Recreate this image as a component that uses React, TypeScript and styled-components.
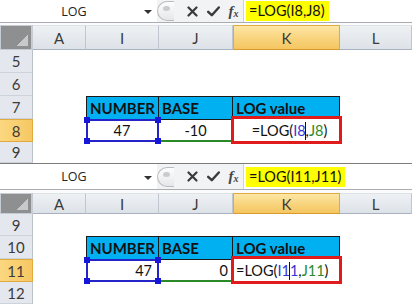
import React from "react";
import styled, { createGlobalStyle } from "styled-components";

const GlobalStyle = createGlobalStyle`
  html, body {
    margin: 0;
    padding: 0;
    background: #fff;
  }
  body {
    width: 412px;
    height: 304px;
    overflow: hidden;
    font-family: "Lato", "Liberation Sans", sans-serif;
  }
`;

type RowDef = { n: number; h: number };

type SheetDef = {
  name: string;
  formula: string;
  barHeight: number;
  gap: number;
  headHeight: number;
  rows: RowDef[];
  headerRow: number;
  dataRow: number;
  number: string;
  base: string;
  align: "center" | "right";
  formulaAlign: "center" | "left";
  formulaCell: React.ReactNode;
};

const COLS = ["A", "I", "J", "K", "L"];
const SELECTED_COL = "K";

const Caret = styled.span`
  display: inline-block;
  width: 1px;
  height: 18px;
  background: #111;
  vertical-align: middle;
  margin: 0 -0.5px;
`;

const Blue = styled.span`
  color: #3535cf;
`;

const Green = styled.span`
  color: #2b8a2b;
`;

const sheets: SheetDef[] = [
  {
    name: "LOG",
    formula: "=LOG(I8,J8)",
    barHeight: 22,
    gap: 2,
    headHeight: 25,
    rows: [
      { n: 5, h: 23 },
      { n: 6, h: 23 },
      { n: 7, h: 23 },
      { n: 8, h: 23 },
      { n: 9, h: 21 },
    ],
    headerRow: 7,
    dataRow: 8,
    number: "47",
    base: "-10",
    align: "center",
    formulaAlign: "center",
    formulaCell: (
      <>
        =LOG(<Blue>I8</Blue>
        <Caret />,<Green>J8</Green>)
      </>
    ),
  },
  {
    name: "LOG",
    formula: "=LOG(I11,J11)",
    barHeight: 25,
    gap: 3,
    headHeight: 21,
    rows: [
      { n: 9, h: 22 },
      { n: 10, h: 23 },
      { n: 11, h: 23 },
      { n: 12, h: 22 },
    ],
    headerRow: 10,
    dataRow: 11,
    number: "47",
    base: "0",
    align: "right",
    formulaAlign: "left",
    formulaCell: (
      <>
        =LOG(<Blue>I1</Blue>
        <Caret />
        <Blue>1</Blue>,<Green>J11</Green>)
      </>
    ),
  },
];

const XIcon = () => (
  <svg width="11" height="11" viewBox="0 0 11 11">
    <path d="M1.5 1.5 L9.5 9.5 M9.5 1.5 L1.5 9.5" stroke="#3a3a3a" strokeWidth="2.2" strokeLinecap="round" />
  </svg>
);

const CheckIcon = () => (
  <svg width="13" height="11" viewBox="0 0 13 11">
    <path d="M1.2 5.8 L4.8 9.2 L11.8 1.5" fill="none" stroke="#3a3a3a" strokeWidth="2.4" strokeLinecap="round" strokeLinejoin="round" />
  </svg>
);

const App = () => {
  return (
    <Page>
      <GlobalStyle />
      {sheets.map((s, i) => (
        <Panel key={i} $last={i === sheets.length - 1}>
          <FormulaBar $h={s.barHeight}>
            <NameBox>
              <NameText>{s.name}</NameText>
              <DropArrow />
            </NameBox>
            <Controls>
              <Splitter />
              <IconSlot $w={20}>
                <XIcon />
              </IconSlot>
              <IconSlot $w={22}>
                <CheckIcon />
              </IconSlot>
              <Fx>
                f<sub>x</sub>
              </Fx>
            </Controls>
            <FormulaInput>
              <Highlight>{s.formula}</Highlight>
            </FormulaInput>
          </FormulaBar>
          <BarGap $h={s.gap} />
          <Grid $rows={[s.headHeight, ...s.rows.map((r) => r.h)]}>
            <Corner />
            {COLS.map((c) => (
              <ColHead key={c} $selected={c === SELECTED_COL}>
                {c}
              </ColHead>
            ))}
            {s.rows.map((r) => (
              <React.Fragment key={r.n}>
                <RowHead $selected={r.n === s.dataRow}>{r.n}</RowHead>
                {r.n === s.headerRow ? (
                  <>
                    <Cell />
                    <TitleCell $first>NUMBER</TitleCell>
                    <TitleCell>BASE</TitleCell>
                    <TitleCell>LOG value</TitleCell>
                    <Cell />
                  </>
                ) : r.n === s.dataRow ? (
                  <>
                    <Cell />
                    <RefCell $align={s.align}>
                      {s.number}
                      <Handle $top $left />
                      <Handle $top />
                      <Handle $left />
                      <Handle />
                    </RefCell>
                    <BaseCell $align={s.align}>{s.base}</BaseCell>
                    <FormulaCell $align={s.formulaAlign}>{s.formulaCell}</FormulaCell>
                    <Cell />
                  </>
                ) : (
                  COLS.map((c) => <Cell key={c} />)
                )}
              </React.Fragment>
            ))}
          </Grid>
        </Panel>
      ))}
    </Page>
  );
};

export default App;

const Page = styled.div`
  width: 412px;
  height: 304px;
  display: flex;
  flex-direction: column;
  overflow: hidden;
`;

const Panel = styled.section<{ $last?: boolean }>`
  display: flex;
  flex-direction: column;
  border-bottom: ${(p) => (p.$last ? "none" : "1px solid #7c7c7c")};
`;

const FormulaBar = styled.div<{ $h: number }>`
  height: ${(p) => p.$h}px;
  display: flex;
  align-items: stretch;
  border-bottom: 1px solid #a9acb1;
  background: #fff;
`;

const NameBox = styled.div`
  width: 157px;
  display: flex;
  align-items: center;
  background: #fff;
`;

const NameText = styled.span`
  flex: 1;
  text-align: center;
  padding-left: 4px;
  font-family: "Open Sans", "Liberation Sans", sans-serif;
  font-size: 12.5px;
  color: #222;
`;

const DropArrow = styled.span`
  width: 0;
  height: 0;
  margin: 2px 5px 0 0;
  border-left: 4px solid transparent;
  border-right: 4px solid transparent;
  border-top: 4px solid #333;
`;

const Controls = styled.div`
  width: 86px;
  display: flex;
  align-items: center;
  background: #f2f3f5;
`;

const Splitter = styled.span`
  position: relative;
  width: 17px;
  height: 20px;
  margin-right: 8px;
  box-sizing: border-box;
  border: 1px solid #b9bcc1;
  border-right: none;
  border-radius: 11px 0 0 11px;
  background: linear-gradient(#fdfdfd, #e6e7ea);

  &::before {
    content: "";
    position: absolute;
    left: 5px;
    top: 4px;
    width: 7px;
    height: 5px;
    border-radius: 50%;
    background: #c9cbcf;
  }
`;

const IconSlot = styled.span<{ $w: number }>`
  width: ${(p) => p.$w}px;
  display: flex;
  justify-content: center;
  align-items: center;
`;

const Fx = styled.span`
  flex: 1;
  text-align: center;
  font-family: "Liberation Serif", "DejaVu Serif", serif;
  font-style: italic;
  font-weight: bold;
  font-size: 15px;
  color: #444;

  sub {
    font-size: 10px;
    vertical-align: -1px;
  }
`;

const FormulaInput = styled.div`
  flex: 1;
  display: flex;
  align-items: center;
  padding-left: 2px;
  border-left: 1px solid #d0d2d6;
  background: #fff;
`;

const Highlight = styled.span`
  background: #ffff00;
  height: 20px;
  line-height: 20px;
  padding: 0 4px 0 3px;
  font-size: 14.5px;
  color: #111;
`;

const BarGap = styled.div<{ $h: number }>`
  height: ${(p) => p.$h}px;
  background: #fbfbfc;
`;

const Grid = styled.div<{ $rows: number[] }>`
  display: grid;
  grid-template-columns: 33px 53px 73px 74px 107px 72px;
  grid-template-rows: ${(p) => p.$rows.map((r) => `${r}px`).join(" ")};
  font-size: 14.5px;
  color: #111;
`;

const headBase = `
  box-sizing: border-box;
  display: flex;
  align-items: center;
  justify-content: center;
  font-size: 15px;
  color: #3b3b3b;
`;

const Corner = styled.div`
  box-sizing: border-box;
  border: 1px solid #c6ccd4;
  border-width: 1px 2px 1px 1px;
  background:
    linear-gradient(135deg, transparent 62%, #c8c9cb 62%) right 3px bottom 3px / 15px 15px no-repeat,
    #8e8f91;
`;

const ColHead = styled.div<{ $selected?: boolean }>`
  ${headBase}
  border-right: 1px solid ${(p) => (p.$selected ? "#e2a93f" : "#bfc6cf")};
  border-bottom: 1px solid ${(p) => (p.$selected ? "#d99a2b" : "#a8b1bd")};
  border-top: 1px solid ${(p) => (p.$selected ? "#e2a93f" : "#dfe3e8")};
  border-left: ${(p) => (p.$selected ? "1px solid #e2a93f" : "none")};
  background: ${(p) =>
    p.$selected
      ? "linear-gradient(#fde7a6, #f8d37c 55%, #f4c660)"
      : "linear-gradient(#eef1f4, #dde2e8)"};
`;

const RowHead = styled.div<{ $selected?: boolean }>`
  ${headBase}
  border-right: 1px solid ${(p) => (p.$selected ? "#e2a93f" : "#bac2cc")};
  border-bottom: 1px solid ${(p) => (p.$selected ? "#e2a93f" : "#cdd3db")};
  border-top: ${(p) => (p.$selected ? "1px solid #e2a93f" : "none")};
  background: ${(p) => (p.$selected ? "linear-gradient(90deg, #fbd77f, #f6c864)" : "#e4e8ee")};
`;

const Cell = styled.div<{ $align?: "center" | "right" | "left" }>`
  position: relative;
  box-sizing: border-box;
  display: flex;
  align-items: center;
  justify-content: ${(p) =>
    p.$align === "right" ? "flex-end" : p.$align === "left" ? "flex-start" : "center"};
  padding: 0 5px 0 4px;
  white-space: nowrap;
  background: #fff;
`;

const TitleCell = styled(Cell)<{ $first?: boolean }>`
  justify-content: flex-start;
  padding-left: 3px;
  background: #00b0f0;
  font-size: 15px;
  font-weight: bold;
  color: #111;
  border-top: 1px solid #1a1a1a;
  border-right: 1px solid #1a1a1a;
  border-left: ${(p) => (p.$first ? "1px solid #1a1a1a" : "none")};
`;

const RefCell = styled(Cell)`
  border: 2px solid #2424c8;
  z-index: 1;
`;

const BaseCell = styled(Cell)`
  border-bottom: 2px solid #2a8a2a;
  border-top: 1px solid #1a1a1a;
`;

const FormulaCell = styled(Cell)`
  padding: 0 ${(p) => (p.$align === "center" ? "0 0 6px" : "3px 0 3px")};
  z-index: 2;

  &::after {
    content: "";
    position: absolute;
    inset: -3px -2px -2px -2px;
    border: 3px solid #e01b1b;
    pointer-events: none;
  }
`;

const Handle = styled.span<{ $top?: boolean; $left?: boolean }>`
  position: absolute;
  width: 6px;
  height: 6px;
  background: #1616d8;
  ${(p) => (p.$top ? "top: -4px;" : "bottom: -4px;")}
  ${(p) => (p.$left ? "left: -4px;" : "right: -4px;")}
`;
